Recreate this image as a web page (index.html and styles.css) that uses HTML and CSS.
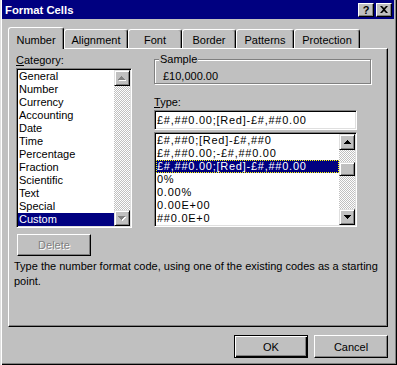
FILE: index.html
```html
<!DOCTYPE html>
<html lang="en">
<head>
    <meta charset="UTF-8">
    <title>Format Cells</title>
    <link rel="stylesheet" href="styles.css">
</head>
<body>
<div class="window">
    <div class="titlebar">
        <span class="title">Format Cells</span>
        <div class="caption-btns">
            <span class="cap-btn">?</span>
            <span class="cap-btn">
                <svg width="8" height="7" viewBox="0 0 8 7"><path d="M0 0h2l2 2 2-2h2L5 3.5 8 7H6L4 5 2 7H0l3-3.5z" fill="#000"/></svg>
            </span>
        </div>
    </div>
    <div class="dialog">
        <div class="tabs">
            <div class="tab active tab-number">Number</div>
            <div class="tab tab-alignment">Alignment</div>
            <div class="tab tab-font">Font</div>
            <div class="tab tab-border">Border</div>
            <div class="tab tab-patterns">Patterns</div>
            <div class="tab tab-protection">Protection</div>
        </div>
        <div class="panel">
            <div class="cols">
                <div class="col-left">
                    <div class="label"><u>C</u>ategory:</div>
                    <div class="listbox cat-list">
                        <div class="items">
                            <div class="item">General</div>
                            <div class="item">Number</div>
                            <div class="item">Currency</div>
                            <div class="item">Accounting</div>
                            <div class="item">Date</div>
                            <div class="item">Time</div>
                            <div class="item">Percentage</div>
                            <div class="item">Fraction</div>
                            <div class="item">Scientific</div>
                            <div class="item">Text</div>
                            <div class="item">Special</div>
                            <div class="item selected">Custom</div>
                        </div>
                        <div class="scrollbar">
                            <div class="sb-btn">
                                <svg width="8" height="5" viewBox="0 0 8 5"><path d="M4 1h1v1h1v1h1v1h1v1H1V4h1V3h1V2h1z" fill="#fff"/><path d="M3 0h1v1h1v1h1v1h1v1H0V3h1V2h1V1h1z" fill="#808080"/></svg>
                            </div>
                            <div class="sb-track"></div>
                            <div class="sb-btn">
                                <svg width="8" height="5" viewBox="0 0 8 5"><path d="M1 1h7v1H7v1H6v1H5v1H4V4H3V3H2V2H1z" fill="#fff"/><path d="M0 0h7v1H6v1H5v1H4v1H3V3H2V2H1V1H0z" fill="#808080"/></svg>
                            </div>
                        </div>
                    </div>
                </div>
                <div class="col-right">
                    <fieldset class="group">
                        <legend>Sample</legend>
                        <div class="sample-value">£10,000.00</div>
                    </fieldset>
                    <div class="label type-label"><u>T</u>ype:</div>
                    <div class="textbox code">£#,##0.00;[Red]-£#,##0.00</div>
                    <div class="listbox type-list">
                        <div class="items code">
                            <div class="item">£#,##0;[Red]-£#,##0</div>
                            <div class="item">£#,##0.00;-£#,##0.00</div>
                            <div class="item selected focused">£#,##0.00;[Red]-£#,##0.00</div>
                            <div class="item">0%</div>
                            <div class="item">0.00%</div>
                            <div class="item">0.00E+00</div>
                            <div class="item">##0.0E+0</div>
                        </div>
                        <div class="scrollbar">
                            <div class="sb-btn">
                                <svg width="7" height="4" viewBox="0 0 7 4"><path d="M3 0h1v1h1v1h1v1h1v1H0V3h1V2h1V1h1z" fill="#000"/></svg>
                            </div>
                            <div class="sb-track">
                                <div class="sb-thumb"></div>
                            </div>
                            <div class="sb-btn">
                                <svg width="7" height="4" viewBox="0 0 7 4"><path d="M0 0h7v1H6v1H5v1H4v1H3V3H2V2H1V1H0z" fill="#000"/></svg>
                            </div>
                        </div>
                    </div>
                </div>
            </div>
            <button class="btn delete" disabled>Delete</button>
            <p class="hint">Type the number format code, using one of the existing codes as a starting point.</p>
        </div>
        <div class="actions">
            <button class="btn btn-default">OK</button>
            <button class="btn">Cancel</button>
        </div>
    </div>
</div>
</body>
</html>
```

FILE: styles.css
```css
html, body {
    margin: 0;
    background-color: #c0c0c0;
}
body {
    font-family: "Liberation Sans", Arial, sans-serif;
    font-size: 11px;
    color: #000;
}
.window {
    width: 397px;
    height: 365px;
    box-sizing: border-box;
    padding: 0 3px 3px 2px;
    background: #c0c0c0;
    box-shadow: inset 1px 0 #dfdfdf, inset 2px 0 #fff, inset -1px -1px #000, inset -2px -2px #808080;
    display: flex;
    flex-direction: column;
}
.titlebar {
    height: 19px;
    background: #000080;
    color: white;
    padding: 0 2px 0 3px;
    display: flex;
    justify-content: space-between;
    align-items: center;
}
.title {
    font-weight: bold;
    font-size: 11.3px;
}
.caption-btns {
    display: flex;
    gap: 2px;
}
.cap-btn {
    width: 16px;
    height: 14px;
    box-sizing: border-box;
    background: #c0c0c0;
    color: #000;
    border: 1px solid;
    border-color: #fff #000 #000 #fff;
    box-shadow: inset -1px -1px #808080;
    display: flex;
    justify-content: center;
    align-items: center;
    font-weight: bold;
    font-size: 11px;
}
.dialog {
    padding: 8px 6px 0;
}
.tabs {
    display: flex;
    align-items: flex-end;
    height: 21px;
}
.tab {
    height: 19px;
    box-sizing: border-box;
    border: 1px solid;
    border-color: #fff #000 transparent #fff;
    border-bottom: 0;
    border-radius: 3px 3px 0 0;
    box-shadow: inset -1px 0 #808080;
    text-align: center;
    line-height: 13px;
    padding-top: 4px;
}
.tab.active {
    height: 22px;
    margin-bottom: -1px;
    padding-top: 6px;
    background: #c0c0c0;
    position: relative;
    z-index: 1;
}
.tab-number { width: 56px; }
.tab-alignment { width: 64px; }
.tab-font { width: 54px; }
.tab-border { width: 54px; }
.tab-patterns { width: 58px; }
.tab-protection { width: 66px; }
.panel {
    height: 279px;
    box-sizing: border-box;
    border: 1px solid;
    border-color: #fff #000 #000 #fff;
    box-shadow: inset -1px -1px #808080;
    padding: 5px 0 0 7px;
}
.cols {
    display: flex;
    gap: 22px;
}
.col-left {
    width: 116px;
}
.col-right {
    width: 217px;
    margin-top: -1px;
}
.label {
    line-height: 13px;
    margin-bottom: 1px;
}
.listbox {
    box-sizing: border-box;
    border: 1px solid;
    border-color: #808080 #fff #fff #808080;
    padding: 1px;
    box-shadow: inset 1px 1px #000, inset -1px -1px #dfdfdf;
    background: white;
    display: flex;
}
.cat-list {
    height: 160px;
}
.type-list {
    width: 203px;
    height: 95px;
    margin-top: 2px;
}
.items {
    flex: 1;
    overflow: hidden;
}
.item {
    line-height: 13px;
    height: 13px;
    padding-left: 1px;
    white-space: nowrap;
}
.item.selected {
    background: #000080;
    color: white;
}
.item.focused {
    box-sizing: border-box;
    border: 1px dotted #ffff00;
    line-height: 11px;
    padding-left: 0;
}
.code {
    letter-spacing: 0.75px;
}
.scrollbar {
    width: 16px;
    display: flex;
    flex-direction: column;
}
.sb-btn, .sb-thumb {
    width: 16px;
    height: 16px;
    box-sizing: border-box;
    background: #c0c0c0;
    border: 1px solid;
    border-color: #dfdfdf #000 #000 #dfdfdf;
    box-shadow: inset 1px 1px #fff, inset -1px -1px #808080;
    display: flex;
    justify-content: center;
    align-items: center;
}
.sb-track {
    flex: 1;
    background: repeating-conic-gradient(#c0c0c0 0 25%, #fff 0 50%) 0 0 / 2px 2px;
}
.sb-thumb {
    height: 14px;
    margin-top: 12px;
}
.group {
    margin: 0;
    width: 217px;
    box-sizing: border-box;
    padding: 4px 0 0 8px;
    border: 1px solid #808080;
    box-shadow: inset 1px 1px #fff, 1px 1px #fff;
}
.group legend {
    padding: 0 1px;
    margin-left: -4px;
    line-height: 13px;
    background: #c0c0c0;
}
.sample-value {
    line-height: 13px;
}
.type-label {
    margin-top: 12px;
}
.textbox {
    width: 203px;
    height: 20px;
    box-sizing: border-box;
    border: 1px solid;
    border-color: #808080 #fff #fff #808080;
    box-shadow: inset 1px 1px #000, inset -1px -1px #dfdfdf;
    background: white;
    padding: 0 0 0 2px;
    line-height: 18px;
    white-space: nowrap;
}
.btn {
    width: 74px;
    height: 23px;
    box-sizing: border-box;
    background: #c0c0c0;
    border: 1px solid;
    border-color: #fff #000 #000 #fff;
    box-shadow: inset -1px -1px #808080;
    font-family: inherit;
    font-size: 11px;
    color: #000;
    padding: 0;
}
.btn-default {
    border-color: #000;
    box-shadow: inset 1px 1px #fff, inset -1px -1px #000, inset -2px -2px #808080;
}
.delete {
    display: block;
    height: 22px;
    margin: 6px 0 0 1px;
    color: #808080;
    text-shadow: 1px 1px #fff;
}
.hint {
    margin: 3px 0 0 -2px;
    width: 372px;
    line-height: 15px;
}
.actions {
    display: flex;
    justify-content: flex-end;
    gap: 6px;
    margin-top: 8px;
}
```
